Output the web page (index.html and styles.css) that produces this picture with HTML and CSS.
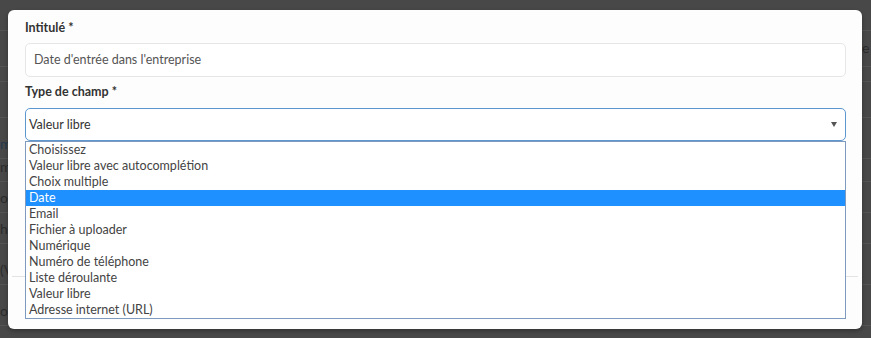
FILE: index.html
```html
<!DOCTYPE html>
<html lang="fr">
<head>
<meta charset="utf-8">
<title>Champ personnalisé</title>
<link rel="stylesheet" href="styles.css">
</head>
<body>
<div class="page">
  <div class="row r1"></div>
  <div class="row r2"><span class="rt">e</span></div>
  <div class="row r3"></div>
  <div class="row r4"></div>
  <div class="row r5"><span class="lt blue">m</span></div>
  <div class="row r6"><span class="lt">m</span></div>
  <div class="row r7"><span class="lt">o</span></div>
  <div class="row r8"><span class="lt">h</span></div>
  <div class="row r9"><span class="lt">(V</span></div>
  <div class="row r10"><span class="lt">or</span></div>
</div>
<div class="overlay">
  <div class="modal">
    <div class="modal-body">
      <label class="label">Intitulé *</label>
      <div class="input">Date d'entrée dans l'entreprise</div>
      <label class="label label2">Type de champ *</label>
      <div class="select-wrap">
        <div class="select">
          <span>Valeur libre</span>
          <span class="arrow"></span>
        </div>
        <ul class="options">
          <li>Choisissez</li>
          <li>Valeur libre avec autocomplétion</li>
          <li>Choix multiple</li>
          <li class="selected">Date</li>
          <li>Email</li>
          <li>Fichier à uploader</li>
          <li>Numérique</li>
          <li>Numéro de téléphone</li>
          <li>Liste déroulante</li>
          <li>Valeur libre</li>
          <li>Adresse internet (URL)</li>
        </ul>
      </div>
    </div>
    <div class="modal-footer"></div>
  </div>
</div>
</body>
</html>
```
FILE: styles.css
```css
html, body {
  margin: 0;
  padding: 0;
}
body {
  width: 871px;
  height: 338px;
  overflow: hidden;
  background: #484848;
  font-family: Lato, "Open Sans", sans-serif;
  position: relative;
}
.page {
  display: flex;
  flex-direction: column;
}
.row {
  border-bottom: 1px solid #545454;
  position: relative;
  font-size: 14px;
  color: #2a2a2a;
}
.r1 { height: 30px; }
.r2 { height: 35px; }
.r3 { height: 14px; }
.r4 { height: 35px; }
.r5 { height: 40px; }
.r6 { height: 22px; }
.r7 { height: 30px; }
.r8 { height: 30px; }
.r9 { height: 40px; }
.r10 { height: 40px; }
.lt {
  position: absolute;
  left: 0;
  bottom: 6px;
  color: #2b2b2b;
}
.lt.blue { color: #23384e; }
.rt {
  position: absolute;
  left: 862px;
  top: 8px;
  color: #2b2b2b;
}
.overlay {
  position: absolute;
  inset: 0;
}
.modal {
  position: absolute;
  left: 8px;
  top: 10px;
  width: 854px;
  height: 319px;
  background: #fdfdfd;
  border-radius: 6px;
  display: flex;
  flex-direction: column;
  box-shadow: 0 2px 4px rgba(0,0,0,0.3);
}
.modal-body {
  flex: 1;
  padding: 9px 16px 0 17px;
}
.modal-footer {
  height: 52px;
  margin: 0 4px;
  border-top: 1px solid #e3e3e3;
}
.label {
  display: block;
  font-weight: 700;
  font-size: 12.5px;
  line-height: 17px;
  color: #333;
}
.input {
  margin-top: 7px;
  height: 32px;
  border: 1px solid #e6e6e6;
  border-radius: 5px;
  padding: 0 8px;
  font-size: 12.5px;
  line-height: 32px;
  color: #555;
  background: #fff;
}
.label2 {
  margin-top: 6px;
}
.select-wrap {
  position: relative;
  margin-top: 8px;
}
.select {
  height: 31px;
  border: 1px solid #5c97cf;
  border-radius: 5px;
  padding: 0 3px;
  display: flex;
  align-items: center;
  justify-content: space-between;
  font-size: 12.5px;
  color: #333;
  background: #fff;
}
.arrow {
  width: 0;
  height: 0;
  border-left: 3px solid transparent;
  border-right: 3px solid transparent;
  border-top: 5px solid #555;
  margin-right: 5px;
}
.options {
  position: absolute;
  left: 0;
  right: 0;
  top: 33px;
  margin: 0;
  padding: 0;
  list-style: none;
  background: #fff;
  border: 1px solid #7e9bbf;
  font-size: 12.5px;
  line-height: 16px;
  color: #444;
}
.options li {
  padding: 0 3px;
  height: 16px;
}
.options li.selected {
  background: #1e90ff;
  color: #fff;
}
```
